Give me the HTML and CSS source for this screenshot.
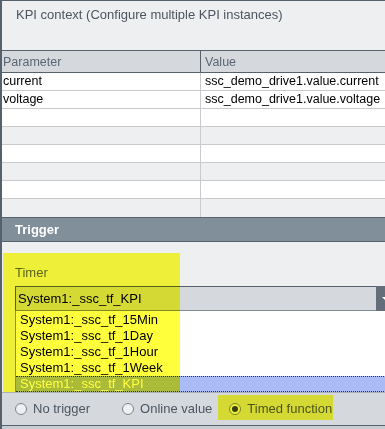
FILE: index.html
```html
<!DOCTYPE html>
<html>
<head>
<meta charset="utf-8">
<link rel="stylesheet" href="styles.css">
</head>
<body>
<div class="frame">
  <div class="title">KPI context (Configure multiple KPI instances)</div>
  <div class="table">
    <div class="row head"><div class="c1">Parameter</div><div class="c2">Value</div></div>
    <div class="row"><div class="c1">current</div><div class="c2">ssc_demo_drive1.value.current</div></div>
    <div class="row"><div class="c1">voltage</div><div class="c2">ssc_demo_drive1.value.voltage</div></div>
    <div class="row"><div class="c1"></div><div class="c2"></div></div>
    <div class="row alt"><div class="c1"></div><div class="c2"></div></div>
    <div class="row"><div class="c1"></div><div class="c2"></div></div>
    <div class="row alt"><div class="c1"></div><div class="c2"></div></div>
    <div class="row"><div class="c1"></div><div class="c2"></div></div>
    <div class="row alt last"><div class="c1"></div><div class="c2"></div></div>
  </div>
  <div class="section">Trigger</div>
  <div class="panel">
    <div class="label">Timer</div>
    <div class="combo">
      <div class="combo-text">System1:_ssc_tf_KPI</div>
      <div class="combo-btn"><span class="tri"></span></div>
    </div>
    <div class="list">
      <div class="item">System1:_ssc_tf_15Min</div>
      <div class="item">System1:_ssc_tf_1Day</div>
      <div class="item">System1:_ssc_tf_1Hour</div>
      <div class="item">System1:_ssc_tf_1Week</div>
      <div class="item sel">System1:_ssc_tf_KPI</div>
    </div>
  </div>
  <div class="radios">
    <div class="radio r1"><span class="dot"></span>No trigger</div>
    <div class="radio r2"><span class="dot"></span>Online value</div>
    <div class="radio r3"><span class="dot on"></span>Timed function</div>
  </div>
  <div class="foot"></div>
  <div class="hl hl-timer"></div>
  <div class="hl hl-radio"></div>
</div>
</body>
</html>
```

FILE: styles.css
```css
html, body {
  margin: 0;
  padding: 0;
  overflow: hidden;
  background: #eeeff1;
}
.frame {
  position: relative;
  width: 398px;
  height: 428px;
  border-top: 1px solid #56616c;
  border-left: 2px solid #56616c;
  font-family: "Liberation Sans", Arial, sans-serif;
  font-size: 13px;
  background: #eeeff1;
}
.title {
  height: 49px;
  box-sizing: border-box;
  padding: 6px 0 0 14px;
  line-height: 16px;
  color: #4c5560;
}
.table {
  border-top: 1px solid #56616c;
}
.row {
  display: flex;
  height: 17px;
  border-bottom: 1px solid #c8cacd;
  background: #ffffff;
  font-size: 12.5px;
  line-height: 17px;
  color: #000;
}
.row.alt { background: #eeeff1; }
.row.last { border-bottom: none; height: 18px; }
.row.head {
  height: 21px;
  line-height: 22px;
  background: #d5d9dd;
  border-bottom: 1px solid #56616c;
  color: #5b6673;
}
.c1 {
  width: 197px;
  padding-left: 1px;
  border-right: 1px solid #c8cacd;
  white-space: nowrap;
}
.head .c1 { border-right-color: #56616c; }
.c2 {
  flex: 1;
  padding-left: 4px;
  white-space: nowrap;
}
.section {
  height: 23px;
  border-top: 1px solid #56616c;
  border-bottom: 1px solid #56616c;
  background: #818f9b;
  color: #ffffff;
  font-weight: bold;
  line-height: 23px;
  padding-left: 13px;
}
.panel {
  height: 150px;
  box-sizing: border-box;
  padding: 23px 0 0 13px;
}
.label {
  line-height: 16px;
  color: #5b6673;
  height: 21px;
}
.combo {
  display: flex;
  height: 23px;
  border-top: 1px solid #56616c;
  border-bottom: 1px solid #7f8a95;
  border-left: 1px solid #56616c;
  background: #d5d9dd;
}
.combo-text {
  flex: 1;
  padding-left: 2px;
  line-height: 23px;
  color: #000;
}
.combo-btn {
  width: 24px;
  margin-top: -1px;
  margin-bottom: -1px;
  background: #636e7a;
  position: relative;
}
.tri {
  position: absolute;
  left: 6px;
  top: 11px;
  width: 0;
  height: 0;
  border-left: 5px solid transparent;
  border-right: 5px solid transparent;
  border-top: 5px solid #ffffff;
}
.list {
  border-left: 1px solid #8a949e;
  background: #ffffff;
  height: 81px;
  padding-top: 1px;
  box-sizing: border-box;
}
.item {
  height: 16px;
  line-height: 16px;
  padding-left: 4px;
  color: #000;
}
.item.sel {
  height: 14px;
  line-height: 14px;
  background: #aabbf5;
  color: #ffffff;
  border-top: 1px dotted #333;
  border-bottom: 1px dotted #333;
}
.radios {
  display: flex;
  align-items: center;
  height: 32px;
  border-top: 1px solid #aab1b8;
  border-bottom: 1px solid #56616c;
  background: #d5d9dd;
  color: #4c5560;
}
.radio {
  display: flex;
  align-items: center;
  gap: 6px;
  line-height: 16px;
}
.r1 { margin-left: 13px; }
.r2 { margin-left: 32px; }
.r3 { margin-left: 17px; }
.dot {
  width: 10px;
  height: 10px;
  border: 1px solid #7d858d;
  border-radius: 50%;
  background: #eef0f2;
  position: relative;
}
.dot.on::after {
  content: "";
  position: absolute;
  left: 2px;
  top: 2px;
  width: 6px;
  height: 6px;
  border-radius: 50%;
  background: #3a3f45;
}
.foot {
  height: 4px;
  background: #c9cdd1;
}
.hl {
  position: absolute;
  background: #ffff3c;
  mix-blend-mode: multiply;
  pointer-events: none;
}
.hl-timer {
  left: 1px;
  top: 252px;
  width: 177px;
  height: 139px;
}
.hl-radio {
  left: 216px;
  top: 394px;
  width: 115px;
  height: 25px;
}
```
